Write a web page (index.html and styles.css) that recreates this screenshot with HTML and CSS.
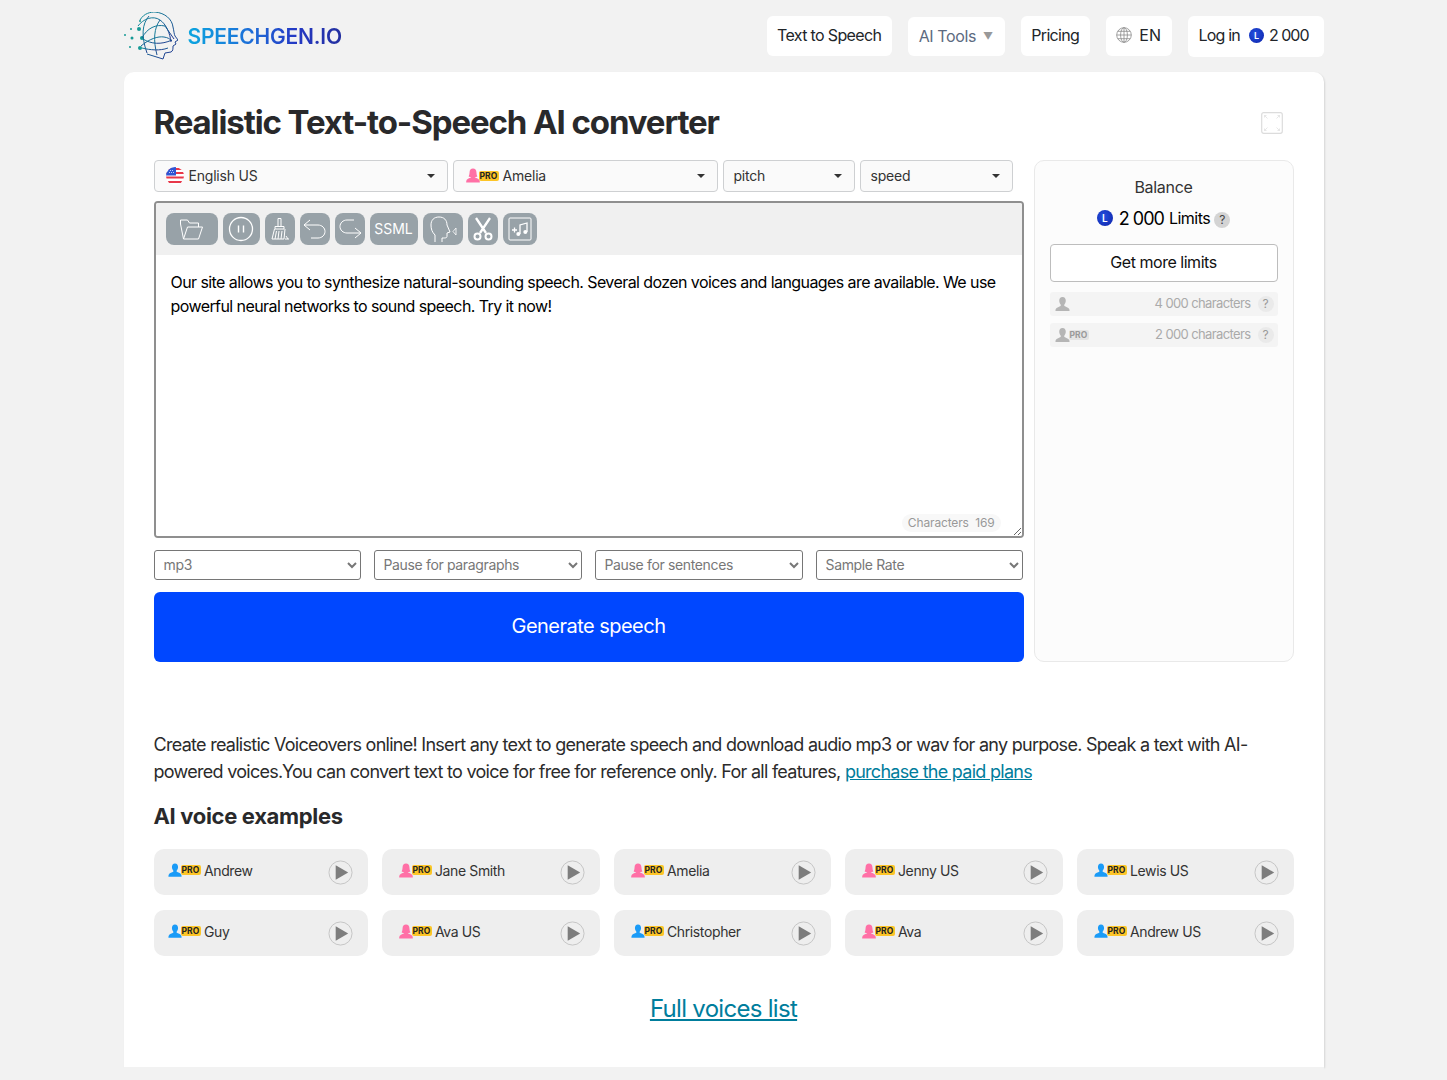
FILE: index.html
```html
<!DOCTYPE html>
<html lang="en">
<head>
<meta charset="utf-8">
<title>Speechgen.io</title>
<link rel="stylesheet" href="styles.css">
</head>
<body>
<svg class="defs" width="0" height="0" aria-hidden="true">
  <defs>
    <symbol id="man" viewBox="0 0 16 16"><path d="M8 0c-2.300 0-3.500 1.800-3.500 4 0 1.600.7 3 1.500 3.900.3.400.3 1.200-.1 1.600-.9.800-4.400 1.300-5.100 3.300-.3.800-.3 1.600-.3 2.200h15c0-.6 0-1.400-.3-2.200-.7-2-4.200-2.500-5.100-3.300-.4-.4-.4-1.200-.1-1.600.8-.9 1.500-2.300 1.500-3.900C11.500 1.800 10.300 0 8 0z"/></symbol>
    <symbol id="woman" viewBox="0 0 16 16"><path d="M8 0C5.500 0 4.100 1.800 4.100 4.200c0 2-.4 3.600-1.100 4.800 1 .6 2.100.8 3 .9-.5.900-4.700 1.200-5.500 3.700-.3.800-.3 1.700-.3 2.400h15.600c0-.7 0-1.600-.3-2.400-.8-2.500-5-2.800-5.500-3.700.9-.1 2-.3 3-.9-.7-1.200-1.100-2.800-1.100-4.800C11.900 1.800 10.500 0 8 0z"/></symbol>
    <symbol id="play" viewBox="0 0 26 26"><circle cx="13" cy="13" r="12" fill="none" stroke="#c4c4c4" stroke-width="1"/><path d="M8 5.500v15l13-7.500z" fill="#7d7d7d"/></symbol>
    <linearGradient id="headG" x1="0" y1="0" x2="1" y2="1"><stop offset="0" stop-color="#0f8f9a"/><stop offset="1" stop-color="#23308f"/></linearGradient>
    <clipPath id="flagClip"><circle cx="9" cy="9" r="9"/></clipPath>
  </defs>
</svg>

<div class="page">
  <header class="topbar">
    <a class="brand">
      <svg class="brand-mark" width="54" height="48" viewBox="0 0 54 48" fill="none">
        <g fill="#169a96">
          <circle cx="16" cy="9" r="1"/><circle cx="15" cy="17" r="2"/><circle cx="7" cy="17" r="1"/><circle cx="1" cy="23" r="1"/><circle cx="8" cy="26" r="1.500"/><circle cx="18" cy="26" r="2"/><circle cx="6" cy="35" r="1"/><circle cx="16" cy="36" r="2"/>
        </g>
        <g stroke="url(#headG)" stroke-width="1">
          <path d="M16 8C20 1 27 0 31 0c10 1 17 7 18 15 1 4 1 7 2 9l3 4-3 2 1 2-3 2c0 3 0 5-2 6l-6 1-2 6-16-5"/>
          <path d="M14 14c5-7 15-11 22-6 6 4 10 13 11 22"/>
          <path d="M18 26c5-10 14-14 23-12l9 13"/>
          <path d="M19 27c8 5 18 6 29 1"/>
          <path d="M17 34c8-7 17-10 23-9 4 .6 6 2 8 4"/>
          <path d="M25 4c-7 8-8 20-2 37"/>
          <path d="M36 8c-6 8-7 20-3 35"/>
          <path d="M18 36c8 2 18 3 26 0"/>
        </g>
      </svg>
      <span class="brand-name">SPEECHGEN.IO</span>
    </a>
    <nav class="nav">
      <a class="nav-item nav-tts">Text to Speech</a>
      <a class="nav-item nav-tools">AI Tools <span class="nav-arrow">▼</span></a>
      <a class="nav-item nav-pricing">Pricing</a>
      <a class="nav-item nav-lang">
        <svg width="16" height="16" viewBox="0 0 16 16" fill="none" stroke="#8b8b8b" stroke-width=".8"><circle cx="8" cy="8" r="7.300"/><ellipse cx="8" cy="8" rx="3.400" ry="7.300"/><path d="M8 .7v14.600M.7 8h14.600M1.800 4.300h12.400M1.800 11.700h12.400"/></svg>
        EN
      </a>
      <a class="nav-item nav-login">Log in <i class="coin nav-coin">L</i> <span class="nav-amount">2 000</span></a>
    </nav>
  </header>

  <main class="card">
    <div class="title-row">
      <h1>Realistic Text-to-Speech AI converter</h1>
      <svg class="fullscreen" width="22" height="22" viewBox="0 0 22 22" fill="none" stroke="#dcdcdc"><rect x=".7" y=".7" width="20.600" height="20.600" rx="2" stroke-width="1.200"/><path d="M3.500 3.500l3 3M3.500 3.500v2M3.500 3.500h2M18.500 3.500l-3 3M18.500 3.500v2M18.500 3.500h-2M3.500 18.500l3-3M3.500 18.500v-2M3.500 18.500h2M18.500 18.500l-3-3M18.500 18.500v-2M18.500 18.500h-2" stroke-width=".7"/></svg>
    </div>

    <div class="tool">
      <section class="workspace">
        <div class="pickers">
          <div class="picker picker-lang">
            <svg class="flag" width="18" height="18" viewBox="0 0 18 18"><g clip-path="url(#flagClip)"><rect width="18" height="18" fill="#fff"/><path d="M0 1h18v2H0zM0 5h18v2H0zM0 9.500h18v2H0zM0 14h18v2H0z" fill="#e8384a"/><rect width="10" height="8.500" fill="#2f55d4"/><path d="M3 5.500h.9M5 5.500h.9M7 5.500h.9M4 3.500h.9M6 3.500h.9" stroke="#fff" stroke-width=".8"/></g></svg>
            <span>English US</span>
          </div>
          <div class="picker picker-voice">
            <svg class="person pink"><use href="#woman"/></svg><b class="pro">PRO</b>
            <span>Amelia</span>
          </div>
          <div class="picker picker-pitch"><span>pitch</span></div>
          <div class="picker picker-speed"><span>speed</span></div>
        </div>

        <div class="editor">
          <div class="toolbar">
            <button class="tb tb-open" aria-label="Open"><svg width="26" height="24" viewBox="0 0 26 24" fill="none" stroke="#fff" stroke-width="1"><path d="M4.500 22 1.500 7V3h7l2 3h9v4"/><path d="M4.500 22h15l4-12H8.500z"/></svg></button>
            <button class="tb tb-pause" aria-label="Pause"><svg width="26" height="26" viewBox="0 0 26 26" fill="none" stroke="#fff"><circle cx="13" cy="13" r="11.500" stroke-width="1.300"/><path d="M10.500 9.500v7M15.500 9.500v7" stroke-width="1.400"/></svg></button>
            <button class="tb tb-clear" aria-label="Clear"><svg width="20" height="26" viewBox="0 0 20 26" fill="none" stroke="#fff" stroke-width="1"><path d="M8 2.500h3v8H8zM5 13h9v-2.500H5zM4.500 13 2 23h12l1-10M5 23l1.500-8M8 23l1-8M11 23l1-8M15 23h4M16 20l2 3"/></svg></button>
            <button class="tb tb-undo" aria-label="Undo"><svg width="24" height="24" viewBox="0 0 24 24" fill="none" stroke="#fff" stroke-width="1"><path d="M1 8h14c4 0 7 3 7 6.500S19 21 15 21H8M1 8l6-5M1 8l6 5"/></svg></button>
            <button class="tb tb-redo" aria-label="Redo"><svg width="24" height="24" viewBox="0 0 24 24" fill="none" stroke="#fff" stroke-width="1"><path d="M16 3H9C5 3 2 6 2 9.500S5 16 9 16h14M23 16l-6-5M23 16l-6 5"/></svg></button>
            <button class="tb tb-ssml">SSML</button>
            <button class="tb tb-voice" aria-label="Voice"><svg width="32" height="28" viewBox="0 0 32 28" fill="none" stroke="#fff" stroke-width="1"><path d="M8 27v-7C5 17 4 14 4 10c0-5 3-8 8-8 5 0 8 3 8 8l3 7-3 1v3c0 2-1 2-5 2v4"/><path d="M29 13v7l-3-3.500z" stroke-width=".8"/></svg></button>
            <button class="tb tb-cut" aria-label="Cut"><svg width="24" height="26" viewBox="0 0 24 26" fill="none" stroke="#fff"><path d="M5 2l10 15M19 2 9 17" stroke-width="2.300"/><circle cx="6.500" cy="20.500" r="3" stroke-width="2"/><circle cx="17.500" cy="20.500" r="3" stroke-width="2"/></svg></button>
            <button class="tb tb-music" aria-label="Music"><svg width="26" height="26" viewBox="0 0 26 26" fill="none" stroke="#fff"><rect x="2" y="2" width="22" height="22" rx="1" stroke-width="1"/><path d="M5 14h5M7.500 11.500v5M13 18V9l7-2v9" stroke-width="1.300"/><circle cx="11.300" cy="18" r="2" fill="#fff" stroke="none"/><circle cx="18.300" cy="16" r="2" fill="#fff" stroke="none"/></svg></button>
          </div>
          <textarea class="text-input" spellcheck="false">Our site allows you to synthesize natural-sounding speech. Several dozen voices and languages are available. We use powerful neural networks to sound speech. Try it now!</textarea>
          <div class="counter">Characters&nbsp; 169</div>
        </div>

        <div class="options">
          <select class="option"><option>mp3</option></select>
          <select class="option"><option>Pause for paragraphs</option></select>
          <select class="option"><option>Pause for sentences</option></select>
          <select class="option"><option>Sample Rate</option></select>
        </div>

        <button class="generate">Generate speech</button>
      </section>

      <aside class="balance">
        <div class="balance-title">Balance</div>
        <div class="balance-value"><i class="coin balance-coin">L</i><span class="amount">2 000</span> <span class="limits">Limits</span> <span class="help help-dark">?</span></div>
        <button class="more">Get more limits</button>
        <div class="quota">
          <svg class="person grey"><use href="#man"/></svg>
          <span class="quota-text">4 000 characters</span><span class="help">?</span>
        </div>
        <div class="quota">
          <svg class="person grey"><use href="#man"/></svg><b class="pro pro-grey">PRO</b>
          <span class="quota-text">2 000 characters</span><span class="help">?</span>
        </div>
      </aside>
    </div>

    <p class="intro">Create realistic Voiceovers online! Insert any text to generate speech and download audio mp3 or wav for any purpose. Speak a text with AI-powered voices.You can convert text to voice for free for reference only. For all features, <a class="link">purchase the paid plans</a></p>

    <h2>AI voice examples</h2>

    <div class="voices">
      <div class="voice"><svg class="person blue"><use href="#man"/></svg><b class="pro">PRO</b><span class="voice-name">Andrew</span><svg class="play"><use href="#play"/></svg></div>
      <div class="voice"><svg class="person pink"><use href="#woman"/></svg><b class="pro">PRO</b><span class="voice-name">Jane Smith</span><svg class="play"><use href="#play"/></svg></div>
      <div class="voice"><svg class="person pink"><use href="#woman"/></svg><b class="pro">PRO</b><span class="voice-name">Amelia</span><svg class="play"><use href="#play"/></svg></div>
      <div class="voice"><svg class="person pink"><use href="#woman"/></svg><b class="pro">PRO</b><span class="voice-name">Jenny US</span><svg class="play"><use href="#play"/></svg></div>
      <div class="voice"><svg class="person blue"><use href="#man"/></svg><b class="pro">PRO</b><span class="voice-name">Lewis US</span><svg class="play"><use href="#play"/></svg></div>
      <div class="voice"><svg class="person blue"><use href="#man"/></svg><b class="pro">PRO</b><span class="voice-name">Guy</span><svg class="play"><use href="#play"/></svg></div>
      <div class="voice"><svg class="person pink"><use href="#woman"/></svg><b class="pro">PRO</b><span class="voice-name">Ava US</span><svg class="play"><use href="#play"/></svg></div>
      <div class="voice"><svg class="person blue"><use href="#man"/></svg><b class="pro">PRO</b><span class="voice-name">Christopher</span><svg class="play"><use href="#play"/></svg></div>
      <div class="voice"><svg class="person pink"><use href="#woman"/></svg><b class="pro">PRO</b><span class="voice-name">Ava</span><svg class="play"><use href="#play"/></svg></div>
      <div class="voice"><svg class="person blue"><use href="#man"/></svg><b class="pro">PRO</b><span class="voice-name">Andrew US</span><svg class="play"><use href="#play"/></svg></div>
    </div>

    <div class="full-list"><a class="link">Full voices list</a></div>
  </main>
  <div class="strip"></div>
</div>
</body>
</html>
```

FILE: styles.css
```css
* { box-sizing: border-box; }
html, body { margin: 0; padding: 0; }
body {
  background: #f2f2f2;
  color: #212529;
  font-family: Inter, "Liberation Sans", sans-serif;
  font-size: 16px;
}
.defs { display: block; height: 0; }
.page { width: 1200px; margin: 0 auto; }

/* header */
.topbar { height: 72px; display: flex; align-items: flex-start; justify-content: space-between; }
.brand { display: flex; align-items: center; gap: 10px; margin-top: 12px; }
.brand-name {
  font-size: 21px;
  font-weight: 600;
  letter-spacing: -.2px;
  background: linear-gradient(90deg, #0ba5df 0%, #1d6fd8 40%, #2438c4 70%, #232f9f 100%);
  -webkit-background-clip: text;
  background-clip: text;
  color: transparent;
}
.nav { display: flex; gap: 16px; margin-top: 16px; }
.nav-item {
  height: 40px;
  padding: 0 10.500px 2px;
  display: flex;
  align-items: center;
  gap: 7px;
  background: #fff;
  border-radius: 6px;
  font-size: 16px;
  letter-spacing: -.58px;
  color: #212529;
  white-space: nowrap;
}
.nav-tts { letter-spacing: -.65px; }
.nav-tools { color: #5c6a80; margin-top: 1px; height: 39px; padding: 0 12px 2px 11px; letter-spacing: -.4px; }
.nav-arrow { color: #999; font-size: 10px; }
.nav-pricing { letter-spacing: -.65px; }
.nav-lang { gap: 7px; padding-right: 11.500px; letter-spacing: 0; }
.nav-login { height: 41px; padding: 0 15px 3px 10px; gap: 0; letter-spacing: -.8px; }
.nav-amount { letter-spacing: -1px; }
.coin {
  display: inline-flex;
  align-items: center;
  justify-content: center;
  border-radius: 50%;
  background: radial-gradient(circle at 40% 40%, #2450e0, #0d22a8);
  color: #fff;
  font-style: normal;
  font-weight: 600;
  letter-spacing: 0;
}
.nav-coin { width: 15px; height: 15px; font-size: 9px; margin: 0 5px 0 9px; }

/* card */
.card {
  height: 995px;
  padding: 30px;
  background: #fff;
  border-radius: 10px 10px 0 0;
  box-shadow: 1px 1px 2px rgba(0, 0, 0, .12);
}
.title-row { height: 40px; margin-bottom: 18px; display: flex; justify-content: space-between; align-items: center; padding-right: 11px; }
h1 { margin: 0; font-size: 33px; font-weight: 700; letter-spacing: -1.1px; color: #29292b; line-height: 40px; }
.fullscreen { margin-top: 2px; }

.tool { display: flex; gap: 10px; height: 502px; }
.workspace { width: 870px; }
.pickers { display: flex; gap: 5px; height: 32px; margin-bottom: 9px; }
.picker {
  position: relative;
  display: flex;
  align-items: center;
  height: 32px;
  padding: 0 0 1px 10px;
  background: #fafafa;
  border: 1px solid #ced0d2;
  border-radius: 4px;
  font-size: 14px;
  letter-spacing: -.2px;
  color: #333;
}
.picker::after {
  content: "";
  position: absolute;
  right: 12px;
  top: 13px;
  border-left: 4px solid transparent;
  border-right: 4px solid transparent;
  border-top: 4px solid #333;
}
.picker-lang { width: 294px; gap: 5px; }
.picker-voice { width: 265px; padding-left: 12px; }
.picker-voice span { margin-left: 4px; }
.picker-pitch { width: 132px; }
.picker-speed { width: 153px; }
.picker-lang .flag { flex: none; margin-left: 1px; }

.person { width: 14px; height: 15px; flex: none; }
.blue { fill: #1a9bf7; }
.pink { fill: #ff70a6; }
.grey { fill: #b5b5b5; }
.pro {
  display: inline-block;
  width: 20px;
  height: 10px;
  margin-left: -1px;
  border-radius: 2px;
  background: #fdc527;
  color: #222;
  font-size: 8.500px;
  font-weight: 700;
  line-height: 10px;
  text-align: center;
  letter-spacing: .2px;
}
.pro-grey { background: #e4e4e4; color: #9a9a9a; }

/* editor */
.editor {
  position: relative;
  display: flex;
  flex-direction: column;
  height: 337px;
  border: 2px solid #8f8f8f;
  border-radius: 4px;
  overflow: hidden;
}
.toolbar { display: flex; gap: 5px; height: 52px; flex: none; padding: 10px; background: #f0f0f0; }
.tb {
  display: flex;
  align-items: center;
  justify-content: center;
  height: 32px;
  padding: 0 0 1px;
  border: 0;
  border-radius: 8px;
  background: #98a2a8;
  color: #fff;
  font-family: inherit;
  font-size: 14px;
}
.tb svg { display: block; }
.tb-open { width: 52px; }
.tb-pause { width: 37px; }
.tb-clear, .tb-undo, .tb-redo, .tb-cut { width: 30px; }
.tb-ssml { width: 48px; }
.tb-voice { width: 40px; }
.tb-music { width: 34px; }
.text-input {
  flex: 1;
  display: block;
  width: 100%;
  padding: 15px 14.500px 15px 15px;
  border: 0;
  outline: 0;
  resize: both;
  background: #fff;
  color: #000;
  font-family: inherit;
  font-size: 16px;
  line-height: 24px;
  letter-spacing: -.58px;
}
.counter {
  position: absolute;
  right: 21px;
  bottom: 4px;
  height: 18px;
  padding: 0 6px;
  border-radius: 9px;
  background: #f8f8f8;
  color: #999;
  font-size: 12px;
  line-height: 18px;
  letter-spacing: -.15px;
}

.options { display: grid; grid-template-columns: 207px 208px 208px 207px; gap: 13px; margin: 12px 0; }
.option {
  min-width: 0;
  height: 30px;
  padding: 0 5px 1px;
  background: #fff;
  border: 1px solid #767676;
  border-radius: 3px;
  color: #777;
  font-family: inherit;
  font-size: 14px;
  letter-spacing: -.35px;
}
.generate {
  display: block;
  width: 100%;
  height: 70px;
  padding: 0 0 2px;
  border: 0;
  border-radius: 6px;
  background: #0047ff;
  color: #fff;
  font-family: inherit;
  font-size: 20px;
  letter-spacing: -.53px;
}

/* balance */
.balance {
  width: 260px;
  padding: 16px 15px;
  background: #fcfcfc;
  border: 1px solid #e9e9e9;
  border-radius: 10px;
}
.balance-title { text-align: center; line-height: 20px; color: #333; letter-spacing: -.3px; }
.balance-value { display: flex; align-items: center; justify-content: center; height: 24px; margin-top: 9px; color: #000; }
.balance-coin { width: 16px; height: 16px; font-size: 10px; margin-right: 6px; }
.amount { font-size: 18px; letter-spacing: -1px; margin-right: 5px; }
.limits { font-size: 16px; letter-spacing: -.5px; margin-right: 4px; }
.help {
  flex: none;
  display: inline-block;
  width: 16px;
  height: 16px;
  border-radius: 50%;
  background: #eaeaea;
  color: #999;
  font-size: 12px;
  line-height: 16px;
  text-align: center;
}
.help-dark { background: #d4d4d4; color: #444; margin-top: 3px; }
.more {
  display: block;
  width: 100%;
  height: 38px;
  margin: 14px 0 10px;
  padding: 0 0 2px;
  background: #fff;
  border: 1px solid #bdbdbd;
  border-radius: 4px;
  color: #111;
  font-family: inherit;
  font-size: 16px;
  letter-spacing: -.47px;
}
.quota {
  display: flex;
  align-items: center;
  height: 24px;
  margin-bottom: 7px;
  padding: 0 4px 0 5px;
  background: #f4f4f4;
  border-radius: 3px;
}
.quota .person { width: 15px; height: 15px; }
.quota-text { margin-left: auto; margin-right: 7px; padding-bottom: 2px; color: #aaa; font-size: 13px; letter-spacing: -.62px; }

/* text */
.intro {
  margin: 69px 0 0;
  font-size: 18px;
  line-height: 27px;
  letter-spacing: -.72px;
  color: #2b2b2b;
}
.link { color: #007d9c; text-decoration: underline; }
h2 { margin: 17px 0 19px; font-size: 22px; line-height: 28px; font-weight: 700; letter-spacing: -.33px; color: #29292b; }

.voices {
  display: grid;
  grid-template-columns: 214px 218px 217px 218px 217px;
  gap: 15px 14px;
}
.voice {
  display: flex;
  align-items: center;
  height: 46px;
  padding: 0 15px 0 17px;
  background: #eee;
  border-radius: 10px;
  font-size: 14px;
  letter-spacing: -.38px;
  color: #333;
}
.voice:nth-child(5n+1) { padding-left: 14px; }
.voice-name { padding-bottom: 3px; }
.voice .person { position: relative; top: -2px; }
.voice .pro { position: relative; top: -2px; margin-right: 3.500px; }
.play { width: 25px; height: 25px; margin-left: auto; flex: none; }

.full-list { margin-top: 38px; text-align: center; font-size: 24px; line-height: 30px; letter-spacing: -.7px; }
.strip { height: 13px; background: #f2f2f2; }
```
